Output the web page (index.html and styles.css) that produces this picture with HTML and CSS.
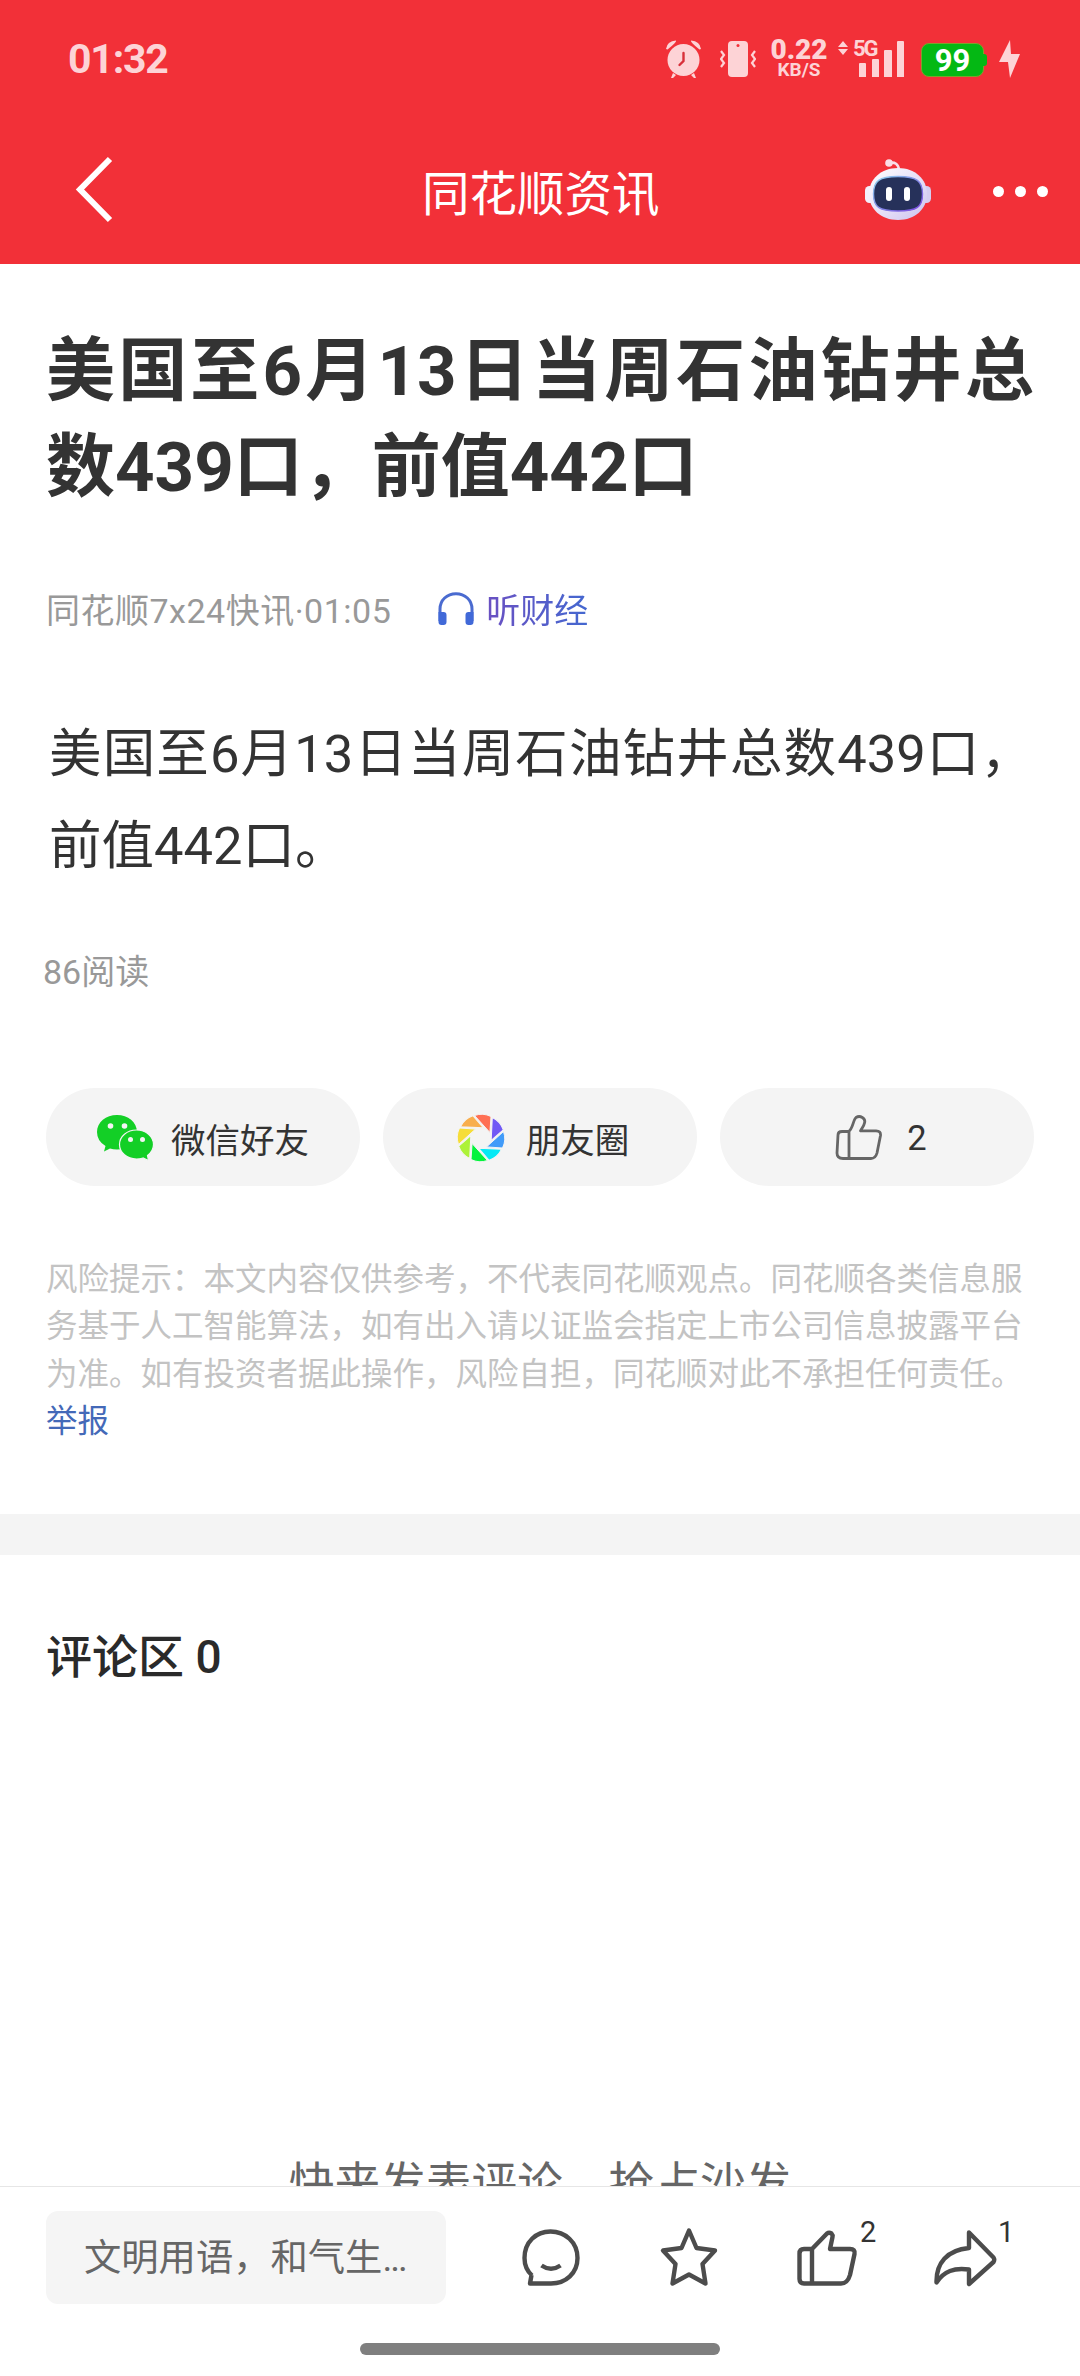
FILE: index.html
```html
<!DOCTYPE html>
<html lang="zh-CN">
<head>
  <meta charset="UTF-8" />
  <meta name="viewport" content="width=device-width, initial-scale=1" />
  <title>同花顺资讯</title>
  <link rel="stylesheet" href="styles.css">
</head>
<body>
  <header class="top">
    <div class="status">
      <span class="time">01:32</span>
      <svg class="alarm" width="38" height="38" viewBox="0 0 38 38" fill="#fdd3d6">
        <circle cx="18.500" cy="20" r="16" />
        <path d="M1 9Q2 1 11 0.500Q12 2 2.500 9.500ZM36 9Q35 1 26 0.500Q25 2 34.500 9.500ZM8 33l3 2-3 3H6zM29 33l-3 2 3 3h2z" />
        <path d="M18.500 13v8l-4 4" fill="none" stroke="#d8303a" stroke-width="2.400" stroke-linecap="round" />
      </svg>
      <svg class="vibrate" width="36" height="36" viewBox="0 0 36 36">
        <rect x="8" y="0" width="20" height="36" rx="4" fill="#fdd3d6" />
        <circle cx="18" cy="4.500" r="1.500" fill="#f23038" />
        <path d="M1 10l3 4-3 4 3 4-3 4M35 10l-3 4 3 4-3 4 3 4" fill="none" stroke="#fdd3d6" stroke-width="2.200" />
      </svg>
      <div class="speed"><b>0.22</b><span>KB/S</span></div>
      <div class="signal">
        <svg width="67" height="36" viewBox="0 0 67 36" fill="#fdd3d6">
          <path d="M5 0l5 6H0zM5 14l5-6H0zM21 23q0-1 1-1h5q1 0 1 1v13h-7zM34 19q0-1 1-1h5q1 0 1 1v17h-7zM46 10q0-1 1-1h6q1 0 1 1v26h-8zM59 1q0-1 1-1h5q1 0 1 1v35h-7z" />
        </svg>
        <span class="net">5G</span>
      </div>
      <div class="battery">99</div>
      <svg class="bolt" width="21" height="38" viewBox="0 0 21 38" fill="#fdd3d6"><path d="M11 0L0 22h9l2 16 10-24h-9z" /></svg>
    </div>
    <nav class="nav">
      <svg class="back" width="40" height="70" viewBox="0 0 40 70" fill="none" stroke="#fff" stroke-width="6"><path d="M35 4L5 34.500L35 65" /></svg>
      <h1>同花顺资讯</h1>
      <svg class="robot" width="66" height="62" viewBox="0 0 66 62">
        <defs>
          <linearGradient id="shell" x1="0" y1="0" x2="1" y2="1">
            <stop offset="0" stop-color="#fff" />
            <stop offset="0.600" stop-color="#e4dcf6" />
            <stop offset="1" stop-color="#c9c2ee" />
          </linearGradient>
          <linearGradient id="rim" x1="0" y1="0" x2="1" y2="1">
            <stop offset="0" stop-color="#8fd4ee" />
            <stop offset="1" stop-color="#7a45e0" />
          </linearGradient>
        </defs>
        <path d="M24 4q9-2 10 7" fill="none" stroke="#f8dfe9" stroke-width="2.600" />
        <circle cx="24" cy="4" r="3.800" fill="#fbdde6" />
        <rect x="0" y="27" width="10" height="17" rx="4.500" fill="#f3effb" />
        <rect x="56" y="27" width="10" height="17" rx="4.500" fill="#d5cdf0" />
        <path d="M33 9C50 9 62 20 62 35S50 61 33 61S4 50 4 35S16 9 33 9Z" fill="url(#shell)" />
        <path d="M33 17.500C52 17.500 57.500 22 57.500 35S52 52 33 52S8.500 48 8.500 35S14 17.500 33 17.500Z" fill="#26315a" stroke="url(#rim)" stroke-width="1.400" />
        <rect x="21" y="28" width="6" height="14" rx="3" fill="#fff" />
        <rect x="39" y="28" width="6" height="14" rx="3" fill="#fff" />
      </svg>
      <div class="more"><i></i><i></i><i></i></div>
    </nav>
  </header>

  <main>
    <article class="article">
      <h2>美国至6月13日当周石油钻井总数439口，前值442口</h2>
      <div class="meta">
        <span class="source">同花顺7x24快讯·01:05</span>
        <svg width="36" height="33" viewBox="0 0 36 33">
          <path d="M2 29V17C2 8 9 1.700 18 1.700S34 8 34 17v12" fill="none" stroke="#4a6bd0" stroke-width="3" />
          <path d="M0.500 20h5q3 0 3 3v7q0 3-3 3h-2q-3 0-3-3zM35.500 20h-5q-3 0-3 3v7q0 3 3 3h2q3 0 3-3z" fill="#4169d8" />
        </svg>
        <a class="listen">听财经</a>
      </div>
      <p class="content">美国至6月13日当周石油钻井总数439口，前值442口。</p>
      <div class="reads">86阅读</div>
      <div class="share">
        <button>
          <svg width="57" height="46" viewBox="0 0 57 46">
            <path d="M20 0C31 0 40 7 40 17S31 34.500 20 34.500Q16 34.500 13 33.500L7 36.500L8.500 31Q0 26 0 17C0 7 9 0 20 0Z" fill="#13cf26" />
            <path d="M39.500 15C49 15 56.500 21.500 56.500 29.500Q56.500 36 50.500 40.500L51.500 45.500L46 43Q43 44 39.500 44C30 44 22.500 37.500 22.500 29.500S30 15 39.500 15Z" fill="#13cf26" stroke="#f4f4f4" stroke-width="1.200" />
            <g fill="#f4f4f4"><circle cx="13.500" cy="11" r="2.800" /><circle cx="27.500" cy="11" r="2.800" /><circle cx="33.500" cy="24.500" r="2.500" /><circle cx="45.500" cy="24.500" r="2.500" /></g>
          </svg>
          微信好友
        </button>
        <button class="circle">
          <svg width="48" height="48" viewBox="-24 -24 48 48">
            <g stroke="#f4f4f4" stroke-width="1">
              <path d="M-6.500-22.500Q2-25.500 10-21.500L8.900-5.500Z" fill="#ff7054" />
              <path d="M-6.500-22.500Q2-25.500 10-21.500L8.900-5.500Z" fill="#7059f5" transform="rotate(45)" />
              <path d="M-6.500-22.500Q2-25.500 10-21.500L8.900-5.500Z" fill="#419bf9" transform="rotate(90)" />
              <path d="M-6.500-22.500Q2-25.500 10-21.500L8.900-5.500Z" fill="#05e9f5" transform="rotate(135)" />
              <path d="M-6.500-22.500Q2-25.500 10-21.500L8.900-5.500Z" fill="#04f33d" transform="rotate(180)" />
              <path d="M-6.500-22.500Q2-25.500 10-21.500L8.900-5.500Z" fill="#adf238" transform="rotate(225)" />
              <path d="M-6.500-22.500Q2-25.500 10-21.500L8.900-5.500Z" fill="#f6dd39" transform="rotate(270)" />
              <path d="M-6.500-22.500Q2-25.500 10-21.500L8.900-5.500Z" fill="#f8ae4d" transform="rotate(315)" />
            </g>
          </svg>
          朋友圈
        </button>
        <button class="like">
          <svg width="48" height="46" viewBox="0 0 48 46" fill="none" stroke="#666" stroke-width="2.800" stroke-linejoin="round">
            <path d="M13.500 16.500C18 14 18 5 21 2.500C25 0 31 3 29.500 8C29 11 27 13 25.500 15.800H41Q46 16 45.500 20.500L42 38Q40.500 43.500 36 43.500H8Q2 43.500 2 38L3 20Q3 16.500 7 16.500ZM14 16.500V43.500" />
          </svg>
          2
        </button>
      </div>
      <p class="risk">风险提示：本文内容仅供参考，不代表同花顺观点。同花顺各类信息服务基于人工智能算法，如有出入请以证监会指定上市公司信息披露平台为准。如有投资者据此操作，风险自担，同花顺对此不承担任何责任。<a>举报</a></p>
    </article>

    <section class="comments">
      <h3>评论区 0</h3>
      <div class="empty">快来发表评论，抢占沙发</div>
    </section>
  </main>

  <footer class="bottom">
    <div class="tools">
      <div class="input">文明用语，和气生<span>...</span></div>
      <div class="tool">
        <svg width="64" height="64" viewBox="0 0 64 64"><path d="M13 50.500C7 45 5.500 39 5.500 33C5.500 17 17 6.500 31.500 6.500S58.500 17 58.500 33C58.500 48 47 58.500 32 58.500H11L12.500 50" /><path d="M22.500 40.500Q32 47 41.500 40.500" /></svg>
      </div>
      <div class="tool">
        <svg width="64" height="64" viewBox="0 0 64 64"><path d="M32 5.500L39.500 23L58 25.500L45.500 39L48.500 58.500L32 49.500L15.500 58.500L18.500 39L6 25.500L24.500 23Z" /></svg>
      </div>
      <div class="tool">
        <svg width="64" height="64" viewBox="0 0 64 64"><path d="M17 24L32 8.500Q34 7 36.500 8.500Q38 10 37.500 12L35 24H55Q60.500 24 59.500 29L55 50Q52.500 58.500 46 58.500H9Q4.500 58.500 4.500 54V28.500Q4.500 24 9 24ZM17 24V58.500" /></svg>
        <sup>2</sup>
      </div>
      <div class="tool">
        <svg width="64" height="64" viewBox="0 0 64 64"><path d="M36 7.500L60.500 32.500Q62 34.500 60.500 37L36 59V44.500C21 42.500 11 46 3.500 57.500C3 38 14 25 36 23Z" /></svg>
        <sup>1</sup>
      </div>
    </div>
    <div class="home"></div>
  </footer>
</body>
</html>
```
FILE: styles.css
```css
* {
  box-sizing: border-box;
}
body {
  margin: 0;
  height: 2376px;
  display: flex;
  flex-direction: column;
  overflow: hidden;
  background: #fff;
  color: #333;
  font-family: Roboto, 'Noto Sans CJK SC', sans-serif;
}
h1, h2, h3, p {
  margin: 0;
}
svg {
  display: block;
  flex-shrink: 0;
}

/* Header */
.top {
  height: 264px;
  flex-shrink: 0;
  background: #f23038;
  color: #fff;
}
.status {
  height: 118px;
  display: flex;
  align-items: center;
  padding-left: 68px;
  color: #fdd3d6;
}
.time {
  width: 597px;
  font-size: 41px;
  font-weight: 700;
  letter-spacing: -1.2px;
}
.vibrate {
  margin-left: 17px;
}
.speed {
  width: 58px;
  margin-left: 14px;
  display: flex;
  flex-direction: column;
  align-items: center;
  font-weight: 700;
  font-size: 19px;
  line-height: 18px;
}
.speed b {
  font-size: 28px;
  line-height: 22px;
}
.signal {
  position: relative;
  margin-left: 10px;
}
.net {
  position: absolute;
  left: 15px;
  top: -3px;
  font-size: 22px;
  font-weight: 700;
  line-height: 22px;
  letter-spacing: -2px;
}
.battery {
  position: relative;
  width: 63px;
  height: 34px;
  margin: 2px 15px 0 16px;
  border: 1px solid #7fa02c;
  border-radius: 8px;
  background: #04b814;
  color: #fff;
  font-size: 31px;
  font-weight: 700;
  line-height: 34px;
  text-align: center;
}
.battery::after {
  content: '';
  position: absolute;
  left: 61px;
  top: 10px;
  width: 4px;
  height: 12px;
  border-radius: 0 3px 3px 0;
  background: #04b814;
}
.nav {
  height: 146px;
  display: flex;
  align-items: center;
  padding: 0 32px 0 75px;
}
.back {
  margin-top: -3px;
}
.nav h1 {
  flex: 1;
  padding-left: 307px;
  margin-top: -2px;
  font-size: 47.5px;
  font-weight: 400;
}
.robot {
  margin-right: 62px;
  margin-top: -2px;
}
.more {
  display: flex;
  gap: 11px;
}
.more i {
  width: 11px;
  height: 11px;
  border-radius: 50%;
  background: #fff;
}

/* Article */
main {
  flex: 1;
  min-height: 0;
  overflow: hidden;
}
.article {
  height: 1250px;
  padding: 60px 46px 0;
}
.article h2 {
  font-size: 69px;
  line-height: 95.5px;
  font-weight: 700;
  text-align: justify;
}
.meta {
  display: flex;
  align-items: center;
  height: 50px;
  margin-top: 68px;
  font-size: 34px;
  color: #999;
}
.source {
  letter-spacing: 0.5px;
}
.meta svg {
  margin: 0 12px 0 47px;
}
.listen {
  background: linear-gradient(90deg, #6a50c2, #4468d0);
  -webkit-background-clip: text;
  background-clip: text;
  color: transparent;
}
.content {
  margin: 75px 1px 0 3px;
  font-size: 52.5px;
  line-height: 92px;
  text-align: justify;
}
.reads {
  margin: 55px 0 0 -3px;
  font-size: 34px;
  line-height: 50px;
  color: #999;
}
.share {
  display: flex;
  gap: 23px;
  margin-top: 91px;
}
.share button {
  width: 314px;
  height: 98px;
  display: flex;
  align-items: center;
  justify-content: center;
  gap: 17px;
  padding: 2px 0 0;
  border: none;
  border-radius: 49px;
  background: #f4f4f4;
  color: #333;
  font: inherit;
  font-size: 34.5px;
}
.share .circle {
  padding-left: 6px;
  gap: 21px;
}
.share .like {
  padding-left: 8px;
  gap: 24px;
}
.risk {
  margin-top: 70px;
  font-size: 31.5px;
  line-height: 47.4px;
  color: #c3c3c3;
}
.risk a {
  color: #4469b8;
}

/* Comments */
.comments {
  border-top: 41px solid #f4f4f4;
  padding: 70px 46px 0;
}
.comments h3 {
  font-size: 46px;
  line-height: 64px;
  font-weight: 500;
  color: #2a2a2a;
}
.empty {
  margin-top: 463px;
  font-size: 45.7px;
  line-height: 66px;
  text-align: center;
  color: #666;
}

/* Bottom bar */
.bottom {
  height: 190px;
  flex-shrink: 0;
  border-top: 1px solid #e6e6e6;
  background: #fff;
}
.tools {
  display: flex;
  align-items: center;
  padding: 24px 0 0 46px;
}
.input {
  width: 400px;
  height: 93px;
  margin-right: 73px;
  padding-left: 38px;
  border-radius: 12px;
  background: #f5f5f5;
  color: #666;
  font-size: 37.3px;
  line-height: 94px;
  white-space: nowrap;
}
.input span {
  letter-spacing: -2px;
}
.tool {
  position: relative;
  margin: -2px 74px 0 0;
}
.tool path {
  fill: none;
  stroke: #4c4c4c;
  stroke-width: 4.4;
  stroke-linejoin: round;
}
.tool sup {
  position: absolute;
  left: 65px;
  top: -9px;
  font-size: 29px;
  line-height: 32px;
}
.home {
  width: 360px;
  height: 12px;
  margin: 39px auto 0;
  border-radius: 6px;
  background: #7f7f7f;
}
```
